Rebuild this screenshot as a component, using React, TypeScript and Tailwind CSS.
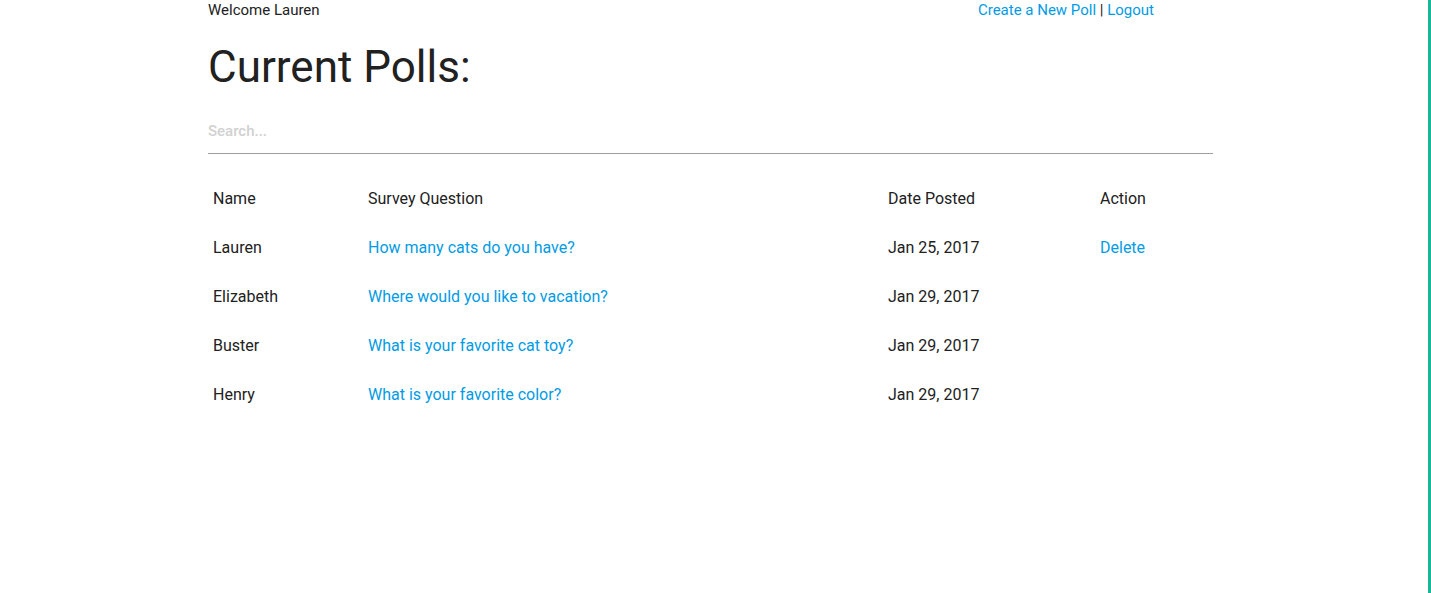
import type { JSX } from 'react'

interface IPoll {
  name: string;
  question: string;
  date: string;
  canDelete: boolean;
}

const polls: IPoll[] = [
  { name: "Lauren", question: "How many cats do you have?", date: "Jan 25, 2017", canDelete: true },
  { name: "Elizabeth", question: "Where would you like to vacation?", date: "Jan 29, 2017", canDelete: false },
  { name: "Buster", question: "What is your favorite cat toy?", date: "Jan 29, 2017", canDelete: false },
  { name: "Henry", question: "What is your favorite color?", date: "Jan 29, 2017", canDelete: false },
]

const App = (): JSX.Element => (
  <div className="flex h-[593px] w-full overflow-hidden bg-white text-[#212121] font-['Roboto',sans-serif]">
    <div className="flex-1">
      <div className="ml-[208px] w-[1005px]">
        {/* top nav */}
        <div className="flex h-5 items-center justify-between pr-[59px] text-[15px] leading-5">
          <span>Welcome Lauren</span>
          <span className="text-[#039be5]">
            <a href="#" className="text-[#039be5]">Create a New Poll</a>
            <span className="text-[#212121]"> | </span>
            <a href="#" className="text-[#039be5]">Logout</a>
          </span>
        </div>

        <h1 className="mt-[22px] text-[44px] leading-[50px] font-normal">Current Polls:</h1>

        <input
          type="text"
          placeholder="Search..."
          className="mt-4 h-[46px] w-full border-b border-[#9e9e9e] bg-transparent text-[15px] font-medium outline-none placeholder:text-[#d1d1d1]"
        />

        <table className="mt-5 w-full table-fixed border-collapse text-left text-[16px]">
          <colgroup>
            <col className="w-[155px]" />
            <col className="w-[520px]" />
            <col className="w-[212px]" />
            <col className="w-[118px]" />
          </colgroup>
          <thead>
            <tr className="h-[49px]">
              <th className="px-[5px] font-normal">Name</th>
              <th className="px-[5px] font-normal">Survey Question</th>
              <th className="px-[5px] font-normal">Date Posted</th>
              <th className="px-[5px] font-normal">Action</th>
            </tr>
          </thead>
          <tbody>
            {polls.map((poll) => (
              <tr key={poll.name} className="h-[49px]">
                <td className="px-[5px]">{poll.name}</td>
                <td className="px-[5px]">
                  <a href="#" className="text-[#039be5]">{poll.question}</a>
                </td>
                <td className="px-[5px]">{poll.date}</td>
                <td className="px-[5px]">
                  {poll.canDelete && <a href="#" className="text-[#039be5]">Delete</a>}
                </td>
              </tr>
            ))}
          </tbody>
        </table>
      </div>
    </div>
    <div className="w-[3px] shrink-0 bg-[#17b897]"></div>
  </div>
)

export default App
